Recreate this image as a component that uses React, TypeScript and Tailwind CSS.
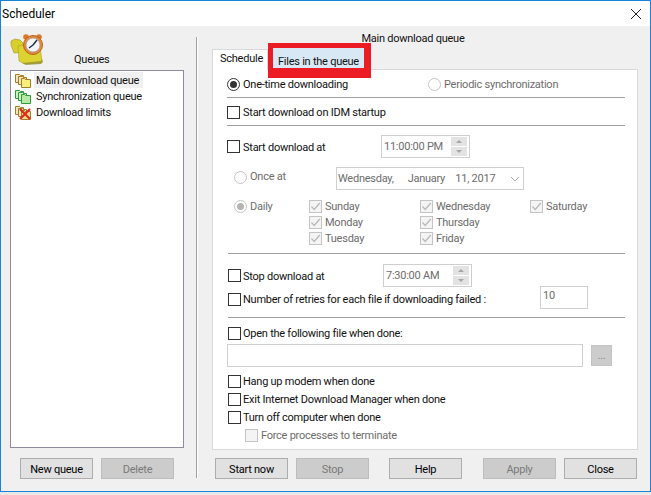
import React from "react";

const Box = ({ disabled, checked }: { disabled?: boolean; checked?: boolean }) => (
  <span className={`flex h-[13px] w-[13px] shrink-0 items-center justify-center border ${disabled ? "border-[#c4c4c4] bg-[#f4f4f4]" : "border-[#333333] bg-white"}`}>
    {checked && (
      <svg width="11" height="11" viewBox="0 0 11 11" fill="none">
        <path d="M1.5 5.5 L4.2 8.5 L9.8 2" stroke="#b8b8b8" strokeWidth="1.2" />
      </svg>
    )}
  </span>
);

const Radio = ({ disabled, checked }: { disabled?: boolean; checked?: boolean }) => (
  <span className={`flex h-[13px] w-[13px] shrink-0 items-center justify-center rounded-full border ${disabled ? "border-[#c4c4c4]" : "border-[#333333]"} bg-white`}>
    {checked && <span className={`h-[7px] w-[7px] rounded-full ${disabled ? "bg-[#b4b4b4]" : "bg-[#333333]"}`} />}
  </span>
);

const Check = ({ label, disabled, className = "", gap = "gap-[2px]" }: { label: string; disabled?: boolean; className?: string; gap?: string }) => (
  <div className={`flex items-center ${gap} ${className} ${disabled ? "text-[#6d6d6d]" : "text-[#111111]"}`}>
    <Box disabled={disabled} />
    <span className="whitespace-nowrap pt-[2px]">{label}</span>
  </div>
);

const Day = ({ label }: { label: string }) => (
  <div className="flex h-4 items-center gap-[3px] text-[#6d6d6d]">
    <Box disabled checked />
    <span className="pt-[2px]">{label}</span>
  </div>
);

const Sep = ({ className = "" }: { className?: string }) => <div className={`h-px bg-[#a0a0a0] ${className}`} />;

const Btn = ({ label, disabled, className = "" }: { label: string; disabled?: boolean; className?: string }) => (
  <div className={`flex h-[21px] w-[73px] items-center justify-center border pt-[2px] ${disabled ? "border-[#bdbdbd] bg-[#cccccc] text-[#7a7a7a]" : "border-[#adadad] bg-[#e1e1e1] text-black"} ${className}`}>
    {label}
  </div>
);

const Spin = () => (
  <div className="flex h-[19px] w-[16px] shrink-0 flex-col gap-px">
    <div className="flex h-[9px] items-center justify-center bg-[#e3e3e3]">
      <span className="h-0 w-0 border-x-[3.5px] border-b-[3.5px] border-x-transparent border-b-[#a6a6a6]" />
    </div>
    <div className="flex h-[9px] items-center justify-center bg-[#e3e3e3]">
      <span className="h-0 w-0 border-x-[3.5px] border-t-[3.5px] border-x-transparent border-t-[#a6a6a6]" />
    </div>
  </div>
);

const TimeField = ({ value, className = "" }: { value: string; className?: string }) => (
  <div className={`flex h-[23px] w-[89px] items-center justify-between border border-[#cfcfcf] bg-white pl-[2px] pr-[2px] text-[#6d6d6d] ${className}`}>
    <span className="whitespace-nowrap">{value}</span>
    <Spin />
  </div>
);

const StackIcon = ({ back, front, stroke, cross }: { back: string; front: string; stroke: string; cross?: boolean }) => (
  <svg width="17" height="15" viewBox="0 0 17 15" className="shrink-0">
    <path d="M0.5 1.5h4l1 1h3v7h-8z" fill={back} stroke={stroke} />
    <path d="M3.5 3.5h4l1 1h3v7h-8z" fill={back} stroke={stroke} />
    <path d="M6.5 5.5h3l1 1h5v8h-9z" fill={front} stroke={stroke} />
    {cross && <path d="M5 4 L15 14 M15 4 L5 14" stroke="#e02b1a" strokeWidth="2.2" />}
  </svg>
);

const ClockFolder = () => (
  <svg width="36" height="33" viewBox="0 0 36 33" className="shrink-0">
    <path d="M1 8l4-2 5 1 3 3 1 9-10 1L1 12z" fill="#d8cf2b" stroke="#9a9420" strokeWidth="0.6" />
    <path d="M8 13l6-1 3 3 13-1 2 14-1 2-16 1-6-3z" fill="#ddd330" stroke="#a8a020" strokeWidth="0.6" />
    <path d="M12 30l19-2 1-2 1 3-2 2-15 1z" fill="#8f8a30" opacity="0.7" />
    <circle cx="16" cy="4" r="2.8" fill="#d97a2a" />
    <circle cx="29" cy="4" r="2.8" fill="#d97a2a" />
    <circle cx="23" cy="12" r="9.5" fill="#e58b3a" stroke="#b8621e" />
    <circle cx="23" cy="12" r="7" fill="#f4f4f8" stroke="#8d8d9c" strokeWidth="0.6" />
    <path d="M23 12l4-5M23 12l-4 3" stroke="#20304a" strokeWidth="1.5" />
  </svg>
);

export default function App() {
  return (
    <div className="h-[495px] w-[651px] overflow-hidden bg-[#e8e8e8] text-[11px] leading-4 tracking-[-0.25px] text-[#111111] [font-family:Roboto,sans-serif]">
      <div className="relative flex h-[492px] w-[651px] flex-col border border-[#1883d7] bg-[#f0f0f0]">
        <div className="flex h-[25px] shrink-0 items-center justify-between bg-white pl-[1px] pr-[8px] text-black">
          <span className="text-[12px] tracking-normal">Scheduler</span>
          <svg width="12" height="12" viewBox="0 0 12 12">
            <path d="M1 1 L11 11 M11 1 L1 11" stroke="#222" strokeWidth="1" />
          </svg>
        </div>

        <div className="flex flex-1">
          <div className="flex w-[195px] shrink-0 flex-col">
            <div className="flex h-[44px] pl-[9px] pt-[7px]">
              <ClockFolder />
              <span className="ml-[28px] mt-[19px]">Queues</span>
            </div>
            <div className="ml-[9px] h-[378px] w-[174px] border border-[#8c8c9a] bg-white px-[1px] pt-px">
              <div className="flex h-4 items-center gap-[2px] pl-[3px]">
                <StackIcon back="#f1e6b8" front="#f6ef7a" stroke="#a87b2a" />
                <span className="flex h-4 w-[109px] items-center bg-[#f0f0f0] pl-[2px] pt-[2px]">Main download queue</span>
              </div>
              <div className="flex h-4 items-center gap-[4px] pl-[3px]">
                <StackIcon back="#cdf0c4" front="#b6e8a6" stroke="#2f9a3a" />
                <span className="pt-[2px]">Synchronization queue</span>
              </div>
              <div className="flex h-4 items-center gap-[4px] pl-[3px]">
                <StackIcon back="#f1e6b8" front="#f2dc8a" stroke="#a87b2a" cross />
                <span className="pt-[2px]">Download limits</span>
              </div>
            </div>
            <div className="ml-[19px] mt-[10px] flex gap-2">
              <Btn label="New queue" />
              <Btn label="Delete" disabled />
            </div>
          </div>

          <div className="mt-[11px] h-[441px] w-[2px] shrink-0 border-l border-r border-l-[#a0a0a0] border-r-white" />

          <div className="flex flex-1 flex-col">
            <div className="h-[23px] w-[430px] pt-[5px] text-center">Main download queue</div>
            <div className="ml-[14px] flex h-[20px]">
              <div className="relative z-10 -mb-px flex h-[21px] w-[56px] items-start justify-center border border-b-0 border-[#d9d9d9] bg-white pl-[3px] pt-px">Schedule</div>
              <div className="relative ml-[5px] -mt-px flex h-[20px] w-[91px] items-center justify-center whitespace-nowrap bg-[#d9e8f5] pt-[8px] text-[#111111]">Files in the queue</div>
            </div>
            <div className="ml-[14px] h-[381px] w-[426px] border border-[#d9d9d9] bg-white text-[#111111]">
              <div className="ml-[14px] mt-[6px] flex h-4 w-[398px] items-center">
                <Radio checked />
                <span className="ml-[3px] w-[185px] pt-[1px]">One-time downloading</span>
                <div className="flex items-center gap-[3px] text-[#6d6d6d]">
                  <Radio disabled />
                  <span className="pt-[1px]">Periodic synchronization</span>
                </div>
              </div>
              <Sep className="ml-[14px] mt-[5px] w-[398px]" />
              <Check label="Start download on IDM startup" gap="gap-[3px]" className="ml-[14px] mt-[6px] h-4" />
              <Sep className="ml-[14px] mt-[5px] w-[398px]" />

              <div className="ml-[14px] mt-[9px] flex h-[23px] items-center">
                <Check label="Start download at" gap="gap-[3px]" className="w-[154px]" />
                <TimeField value="11:00:00 PM" className="w-[88px]" />
              </div>

              <div className="ml-[21px] mt-[9px] flex h-[23px] items-start">
                <div className="mt-[2px] flex h-4 w-[102px] items-center gap-[3px] text-[#6d6d6d]">
                  <Radio disabled />
                  <span>Once at</span>
                </div>
                <div className="flex h-[23px] w-[188px] items-center border border-[#cfcfcf] bg-white pl-[1px] pr-[3px] text-[#6d6d6d]">
                  <span className="w-[70px]">Wednesday,</span>
                  <span className="w-[48px]">January</span>
                  <span className="w-[55px]">11, 2017</span>
                  <svg width="10" height="6" viewBox="0 0 10 6" fill="none"><path d="M1 1 L5 5 L9 1" stroke="#a8a8a8" /></svg>
                </div>
              </div>

              <div className="ml-[21px] mt-[8px] flex">
                <div className="flex h-4 w-[75px] items-center gap-[3px] text-[#6d6d6d]">
                  <Radio disabled checked />
                  <span className="pt-[2px]">Daily</span>
                </div>
                <div className="flex w-[111px] flex-col">
                  <Day label="Sunday" />
                  <Day label="Monday" />
                  <Day label="Tuesday" />
                </div>
                <div className="flex w-[110px] flex-col">
                  <Day label="Wednesday" />
                  <Day label="Thursday" />
                  <Day label="Friday" />
                </div>
                <div className="flex flex-col">
                  <Day label="Saturday" />
                </div>
              </div>

              <Sep className="ml-[15px] mt-[7px] w-[397px]" />

              <div className="ml-[15px] mt-[10px] flex h-[23px] items-center">
                <Check label="Stop download at" className="w-[155px]" />
                <TimeField value="7:30:00 AM" />
              </div>

              <div className="ml-[15px] -mt-px flex h-[23px] items-center">
                <Check label="Number of retries for each file if downloading failed :" className="w-[312px] pt-[3px]" />
                <div className="flex h-[23px] w-[48px] items-start border border-[#cfcfcf] bg-white pl-[2px] pt-[1px] text-[#6d6d6d]">10</div>
              </div>

              <Sep className="ml-[15px] mt-[8px] w-[397px]" />
              <Check label="Open the following file when done:" className="ml-[15px] mt-[7px] h-4" />

              <div className="ml-[14px] mt-[3px] flex h-[23px] items-center">
                <div className="h-[23px] w-[356px] border border-[#d0d0d0] bg-white" />
                <div className="ml-[8px] flex h-[21px] w-[21px] items-center justify-center border border-[#c4c4c4] bg-[#cccccc] text-[#8a8a8a]">...</div>
              </div>

              <Check label="Hang up modem when done" className="ml-[15px] mt-[6px] h-4" />
              <Check label="Exit Internet Download Manager when done" className="ml-[15px] mt-[2px] h-4" />
              <Check label="Turn off computer when done" className="ml-[15px] mt-[2px] h-4" />
              <Check label="Force processes to terminate" disabled gap="gap-[3px]" className="ml-[32px] mt-[2px] h-4" />
            </div>
            <div className="ml-[17px] mt-[8px] flex">
              <Btn label="Start now" />
              <Btn label="Stop" disabled className="ml-[8px]" />
              <Btn label="Help" className="ml-[20px]" />
              <Btn label="Apply" disabled className="ml-[21px]" />
              <Btn label="Close" className="ml-[8px]" />
            </div>
          </div>
        </div>

        <div className="absolute left-[267px] top-[42px] h-[35px] w-[103px] border-b-[10px] border-l-[5px] border-r-[7px] border-t-[5px] border-[#ec1c24]" />
      </div>
    </div>
  );
}
